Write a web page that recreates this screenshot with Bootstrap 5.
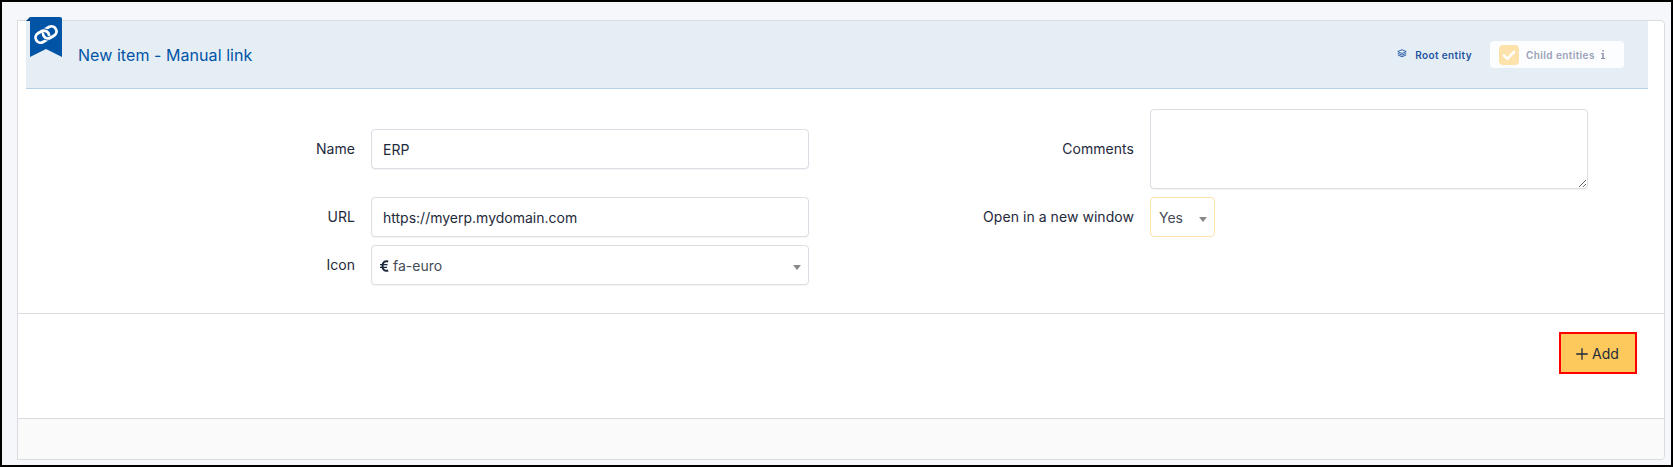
<!DOCTYPE html>
<html lang="en">
<head>
<meta charset="utf-8">
<title>New item - Manual link</title>
<link href="https://cdn.jsdelivr.net/npm/bootstrap@5.3.0/dist/css/bootstrap.min.css" rel="stylesheet">
<style>
  body { font-family: Inter, "Liberation Sans", sans-serif; font-size: 14px; line-height: 20px; color: #1e293b; background: #f5f7fb; }
  .page { height: 467px; border: 2px solid #000; padding: 18px 6px 5px 15px; overflow: hidden; }
  .item-card { height: 440px; border: 1px solid #dadce0; border-radius: 0 4px 4px 0; background: #fff; --bs-card-bg: #fff; }
  .item-header { height: 68px; margin: 0 16px 0 8px; padding: 0 24px 0 52px; background: #e6eef5; border-bottom: 1px solid #b8d0e6; }
  .item-title { font-size: 16px; font-weight: 400; color: #0054a6; line-height: 24px; letter-spacing: .06px; }
  .ribbon-mark { position: absolute; left: 8px; top: -4px; }
  .entity { font-size: 10px; font-weight: 600; color: #1d54a0; letter-spacing: .4px; }
  .entity svg { flex: none; }
  .layers-icon { margin: 0 8px 3px 0; }
  .root-entity { margin-right: 18px; }
  .child-box { width: 134px; height: 27px; background: #fcfdfe; border-radius: 4px; color: #9aa1b9; padding-left: 9px; }
  .tick { width: 20px; height: 20px; border-radius: 4px; background: #fee2ab; margin-right: 7px; }
  .info-icon { margin-left: 6px; }
  .fields { height: 225px; padding: 20px 76px 0 12px; border-bottom: 1px solid #dadce0; }
  .field-row { margin-bottom: 8px; }
  .field-label { width: 341px; padding-right: 16px; letter-spacing: .05px; }
  .field { height: 40px; width: 438px; font-size: 14px; color: #1e293b; border: 1px solid #dadfe5; border-radius: 4px; padding: 8px 11px; box-shadow: 0 1px 1px rgba(30,41,59,.05); }
  textarea.field { height: 80px; }
  .picker { padding: 1px 7px 0 8px; background: #fff; }
  .picker.yes-no { width: 65px; padding-left: 8px; border-color: #fee2ab; box-shadow: none; }
  .picker .txt { color: #444b57; }
  .euro-icon { margin-right: 4px; }
  .arrow { border: 4px solid transparent; border-top: 5px solid #888; border-bottom: 0; margin-top: 3px; }
  .actions { height: 105px; padding: 18px 27px 0 0; border-bottom: 1px solid #dadce0; }
  .btn-add { width: 78px; height: 42px; font-size: 14px; line-height: 20px; border: 2px solid #f00; border-radius: 0; background: #fec95c; color: #1e293b; padding: 1px 1px 0 0; }
  .plus-icon { margin-right: 4px; }
  .item-footer { background: #fafafa; border-radius: 0 0 4px 0; }
</style>
</head>
<body>
<div class="page">
  <main class="card item-card">
    <svg class="ribbon-mark" width="36" height="41" viewBox="0 0 36 41">
      <path d="M0 4 4 0v4z" fill="#003f7d"/>
      <path d="M4 0h30a2 2 0 0 1 2 2v38l-16-8-16 8z" fill="#0054a6"/>
      <g fill="none" transform="rotate(-30 20 17.5)">
        <rect x="8.7" y="12.5" width="14" height="10" rx="5" stroke="#fff" stroke-width="2.8"/>
        <path d="M17.300 17.500a5 5 0 0 0 5 5" stroke="#0054a6" stroke-width="4.200"/>
        <rect x="17.300" y="12.500" width="14" height="10" rx="5" stroke="#fff" stroke-width="2.8"/>
        <path d="M19 12.500a5 5 0 0 1 3.600 4.200" stroke="#0054a6" stroke-width="4.200"/>
        <path d="M17.700 12.500a5 5 0 0 1 5 5" stroke="#fff" stroke-width="2.8"/>
      </g>
    </svg>
    <header class="item-header d-flex align-items-center">
      <h1 class="item-title mb-0 me-auto">New item - Manual link</h1>
      <span class="entity root-entity d-flex align-items-center">
        <svg class="layers-icon" width="10" height="9" viewBox="0 0 10 9" fill="none" stroke="#1d54a0" stroke-width=".9" stroke-linejoin="round"><path d="M5 .7 9.200 2.600 5 4.500.800 2.600zM.8 4.300 5 6.200l4.200-1.900M.8 5.900 5 7.800l4.200-1.900"/></svg>
        Root entity
      </span>
      <label class="entity child-box d-flex align-items-center">
        <span class="tick d-flex"><svg width="20" height="20" viewBox="0 0 20 20" fill="none" stroke="#fff" stroke-width="2.6" stroke-linecap="round" stroke-linejoin="round"><path d="m5 10.5 3.3 3.3L15 7"/></svg></span>
        Child entities
        <svg class="info-icon" width="4" height="9" viewBox="0 0 4 9" fill="#858daa"><path d="M1.300 0h1.500v1.600H1.300zM.2 3h2.500v5H4v1H0V8h1.300V4H.2z"/></svg>
      </label>
    </header>

    <form class="fields">
      <div class="d-flex field-row align-items-center">
        <label class="field-label text-end" for="name">Name</label>
        <input id="name" class="form-control field" value="ERP">
        <label class="field-label text-end" for="comments">Comments</label>
        <textarea id="comments" class="form-control field"></textarea>
      </div>
      <div class="d-flex field-row align-items-center">
        <label class="field-label text-end" for="url">URL</label>
        <input id="url" class="form-control field" value="https://myerp.mydomain.com">
        <span class="field-label text-end">Open in a new window</span>
        <div class="field picker yes-no d-flex align-items-center justify-content-between"><span class="txt">Yes</span><span class="arrow"></span></div>
      </div>
      <div class="d-flex field-row align-items-center">
        <span class="field-label text-end">Icon</span>
        <div class="field picker d-flex align-items-center">
          <svg class="euro-icon" width="9" height="12" viewBox="0 0 9 12" fill="none" stroke="#1e293b"><path d="M8.200 1.600C4.800.4 2.500 2.300 2.500 6s2.300 5.600 5.700 4.400" stroke-width="2.100"/><path d="M0 4.700h7.500M0 7.300h7" stroke-width="1.300"/></svg>
          <span class="txt me-auto">fa-euro</span><span class="arrow"></span>
        </div>
      </div>
    </form>

    <div class="actions d-flex justify-content-end align-items-start">
      <button type="button" class="btn btn-add d-flex align-items-center justify-content-center">
        <svg class="plus-icon" width="12" height="12" viewBox="0 0 12 12" stroke="#1e293b" stroke-width="1.3" stroke-linecap="round"><path d="M6 .7v10.600M.7 6h10.600"/></svg>Add
      </button>
    </div>
    <div class="item-footer flex-grow-1"></div>
  </main>
</div>
<script src="https://cdn.jsdelivr.net/npm/bootstrap@5.3.0/dist/js/bootstrap.bundle.min.js"></script>
</body>
</html>
